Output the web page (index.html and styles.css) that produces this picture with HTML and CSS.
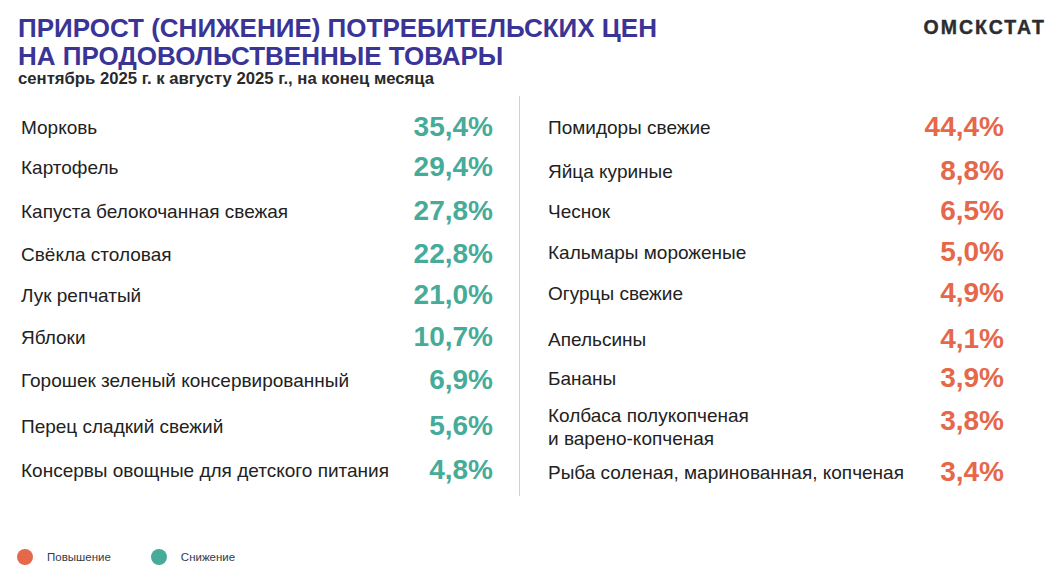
FILE: index.html
```html
<!DOCTYPE html>
<html lang="ru">
<head>
<meta charset="utf-8">
<title>Прирост (снижение) потребительских цен</title>
<link rel="stylesheet" href="styles.css">
</head>
<body>
<div class="page">
  <header class="header">
    <div class="titles">
      <h1 class="title">ПРИРОСТ (СНИЖЕНИЕ) ПОТРЕБИТЕЛЬСКИХ ЦЕН<br>НА ПРОДОВОЛЬСТВЕННЫЕ ТОВАРЫ</h1>
      <p class="subtitle">сентябрь 2025 г. к августу 2025 г., на конец месяца</p>
    </div>
    <div class="logo">ОМСКСТАТ</div>
  </header>

  <main class="board">
    <section class="col col-left">
      <div class="label">Морковь</div><div class="value down">35,4%</div>
      <div class="label">Картофель</div><div class="value down">29,4%</div>
      <div class="label">Капуста белокочанная свежая</div><div class="value down">27,8%</div>
      <div class="label">Свёкла столовая</div><div class="value down">22,8%</div>
      <div class="label">Лук репчатый</div><div class="value down">21,0%</div>
      <div class="label">Яблоки</div><div class="value down">10,7%</div>
      <div class="label">Горошек зеленый консервированный</div><div class="value down">6,9%</div>
      <div class="label">Перец сладкий свежий</div><div class="value down">5,6%</div>
      <div class="label">Консервы овощные для детского питания</div><div class="value down">4,8%</div>
    </section>
    <div class="divider"></div>
    <section class="col col-right">
      <div class="label">Помидоры свежие</div><div class="value up">44,4%</div>
      <div class="label">Яйца куриные</div><div class="value up">8,8%</div>
      <div class="label">Чеснок</div><div class="value up">6,5%</div>
      <div class="label">Кальмары мороженые</div><div class="value up">5,0%</div>
      <div class="label">Огурцы свежие</div><div class="value up">4,9%</div>
      <div class="label">Апельсины</div><div class="value up">4,1%</div>
      <div class="label">Бананы</div><div class="value up">3,9%</div>
      <div class="label label-two">Колбаса полукопченая<br>и варено-копченая</div><div class="value up">3,8%</div>
      <div class="label">Рыба соленая, маринованная, копченая</div><div class="value up">3,4%</div>
    </section>
  </main>

  <footer class="legend">
    <div class="legend-item"><span class="dot dot-up"></span><span>Повышение</span></div>
    <div class="legend-item"><span class="dot dot-down"></span><span>Снижение</span></div>
  </footer>
</div>
</body>
</html>
```

FILE: styles.css
```css
html, body {
  margin: 0;
  padding: 0;
  background: #ffffff;
}

.page {
  width: 1056px;
  height: 582px;
  box-sizing: border-box;
  font-family: "Liberation Sans", Arial, sans-serif;
  color: #222222;
  display: flex;
  flex-direction: column;
}

.header {
  display: flex;
  justify-content: space-between;
  align-items: flex-start;
  padding: 14px 10px 0 18px;
}

.title {
  margin: 0;
  font-size: 26px;
  line-height: 28px;
  font-weight: bold;
  color: #3a3497;
}

.subtitle {
  margin: 0;
  font-size: 16.7px;
  line-height: 17px;
  font-weight: bold;
  color: #2a2a2a;
}

.logo {
  margin-top: 2px;
  font-size: 19.5px;
  line-height: 22px;
  font-weight: bold;
  letter-spacing: 2px;
  color: #2b2d30;
  -webkit-text-stroke: 0.4px #2b2d30;
}

.board {
  display: flex;
  margin-top: 9px;
  height: 400px;
}

.col {
  display: grid;
  grid-template-columns: 1fr auto;
  align-items: start;
  align-content: start;
}

.col-left {
  width: 472px;
  margin-left: 21px;
  padding-top: 15px;
  grid-template-rows: 40px 44px 43px 41px 42px 43px 46px 44px 32px;
}

.col-right {
  width: 456px;
  margin-left: 28px;
  padding-top: 15px;
  grid-template-rows: 44px 40px 41px 41px 46px 39px 43px 51px 32px;
}

.divider {
  width: 1px;
  background: #d0d0d0;
  margin-left: 26px;
}

.label,
.value {
  height: 32px;
  box-sizing: border-box;
  display: flex;
  align-items: center;
}

.label {
  font-size: 19px;
  line-height: 23px;
  color: #222222;
}

.label-two {
  padding-top: 12px;
}

.value {
  justify-content: flex-end;
  font-size: 28px;
  line-height: 32px;
  font-weight: bold;
}

.down {
  color: #46ab98;
}

.up {
  color: #e5684a;
}

.legend {
  display: flex;
  margin-top: 53px;
  padding-left: 17px;
  gap: 40px;
}

.legend-item {
  display: flex;
  align-items: center;
  gap: 14px;
  font-size: 11.5px;
  color: #333a48;
}

.dot {
  width: 16px;
  height: 16px;
  border-radius: 50%;
  display: inline-block;
}

.dot-up {
  background: #e5684a;
}

.dot-down {
  background: #46ab98;
}
```
